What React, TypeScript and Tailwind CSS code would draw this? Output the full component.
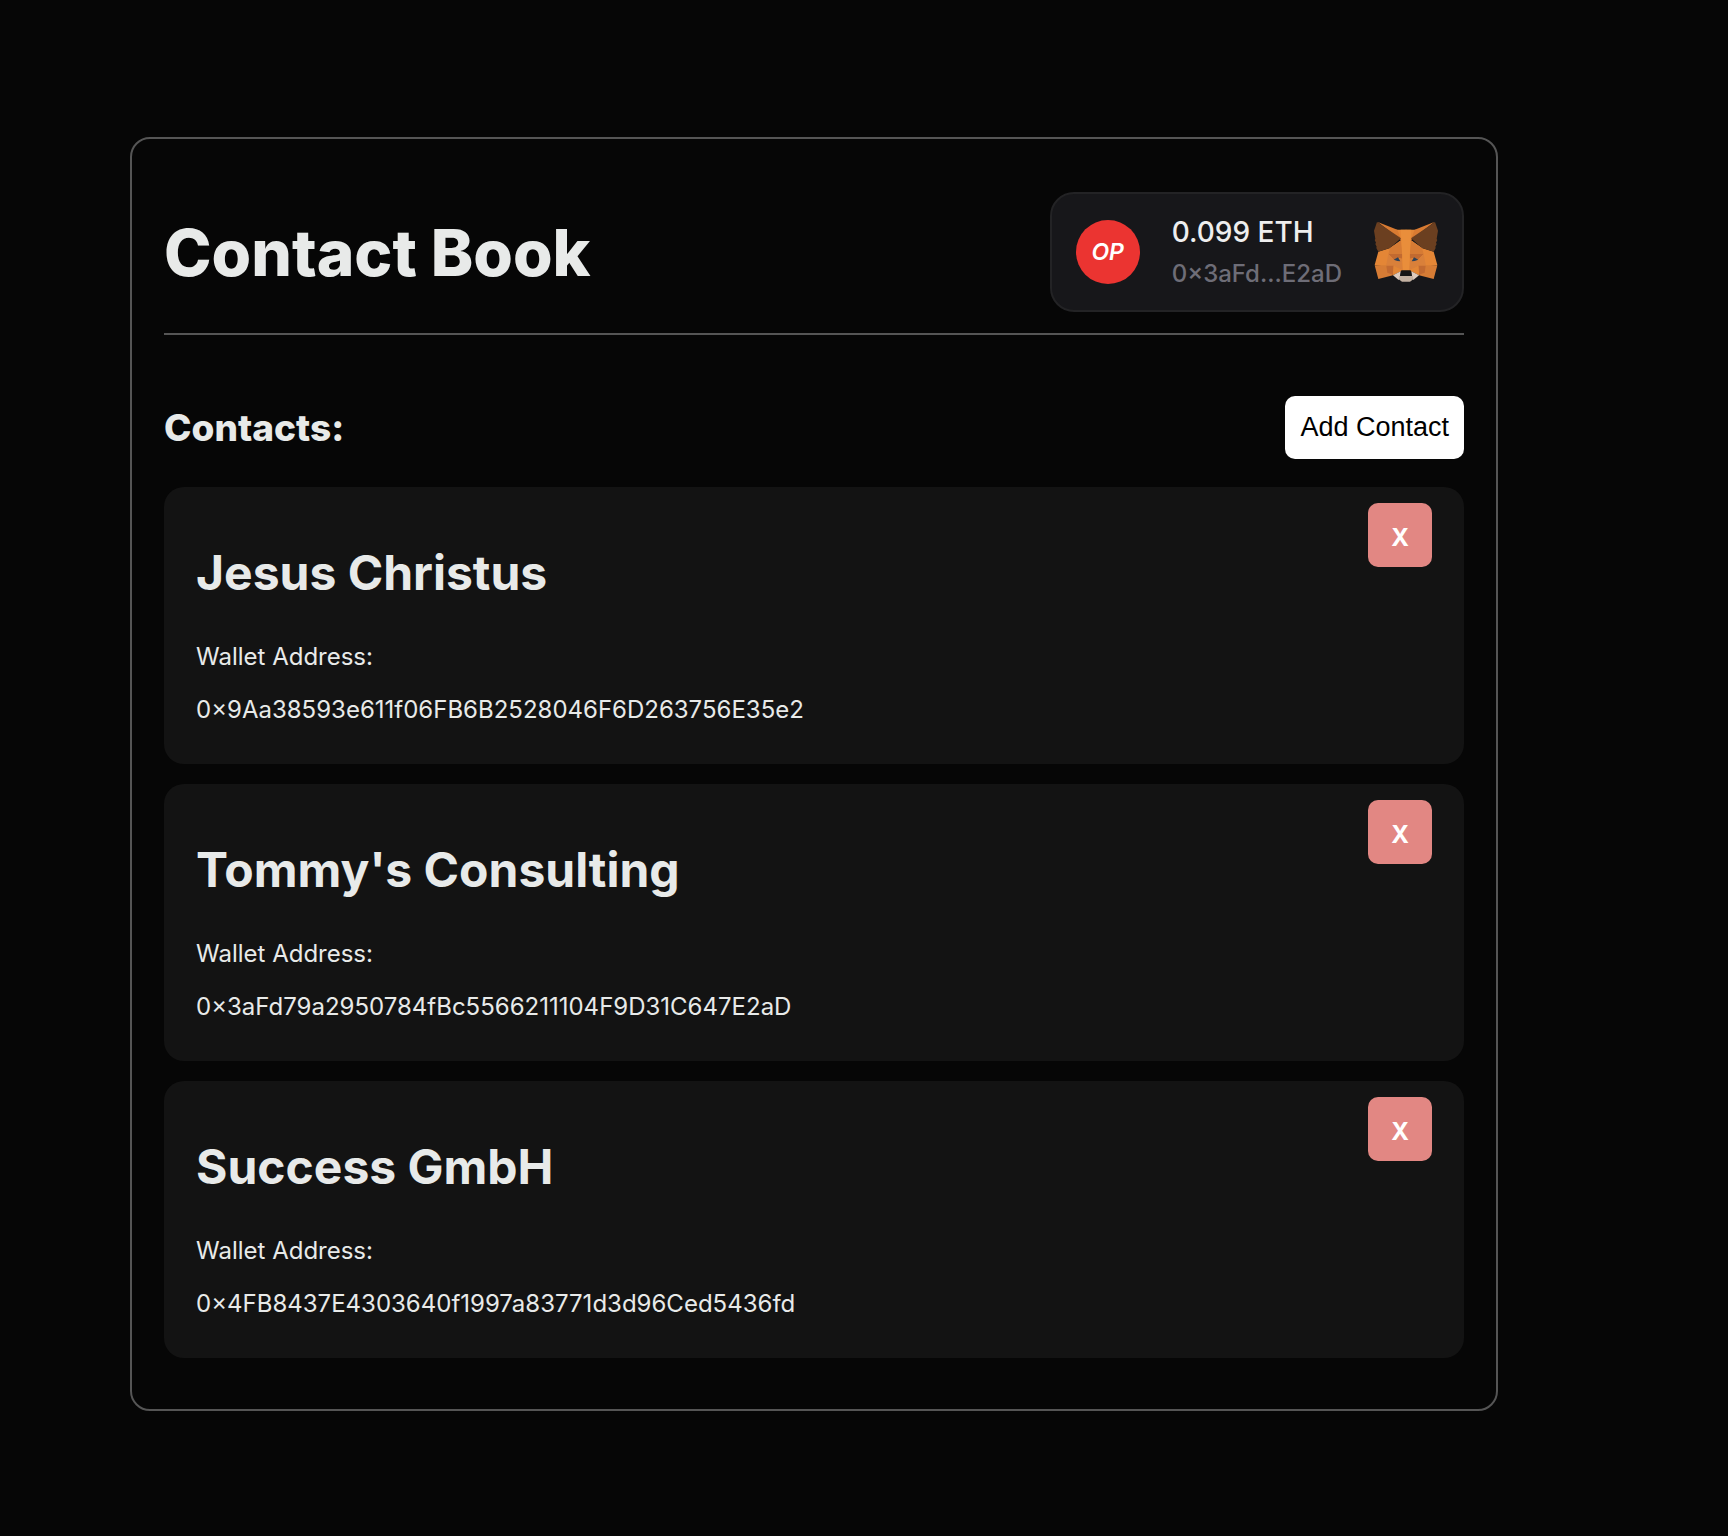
const CONTACTS = [
  { name: "Jesus Christus", address: "0×9Aa38593e611f06FB6B2528046F6D263756E35e2" },
  { name: "Tommy's Consulting", address: "0×3aFd79a2950784fBc5566211104F9D31C647E2aD" },
  { name: "Success GmbH", address: "0×4FB8437E4303640f1997a83771d3d96Ced5436fd" },
];

function FoxHalf() {
  return (
    <g>
      <polygon fill="#E48636" points="13,95 48,84 81,61 66,29 97,29 97,152 80,154 57,166 36,140 2,135" />
      <polygon fill="#D97B32" points="11,6 70,29 82,61" />
      <polygon fill="#6B3F20" points="9,6 0,32 4,57 2,60 6,68 4,72 8,80 7,84 13,95 48,84 81,55" />
      <polygon fill="#D67B34" points="81,61 48,84 43,102 86,102" />
      <polygon fill="#C26A30" points="43,102 86,102 84,116 76,114 60,119" />
      <polygon fill="#D9803A" points="43,102 60,119 84,116 86,150 58,138 36,138" />
      <polygon fill="#2F4258" points="59,119 72,112 79,124 70,123" />
      <polygon fill="#D67C35" points="2,136 36,136 57,166 13,177" />
      <polygon fill="#C26A31" points="37,137 59,137 57,164 40,158" />
      <polygon fill="#E28636" points="59,137 82,152 57,164" />
      <polygon fill="#DDCBBE" points="57,166 80,154 78,168 74,180" />
    </g>
  );
}

function FoxLogo() {
  return (
    <svg viewBox="0 0 192 192" className="size-16 shrink-0" role="img" aria-label="MetaMask">
      <FoxHalf />
      <g transform="matrix(-1 0 0 1 192 0)">
        <FoxHalf />
      </g>
      <polygon fill="#E98E3B" points="80,29 112,29 110,61 105,152 87,152 82,61" />
      <polygon fill="#C3B1A2" points="75,168 117,168 118,178 108,185 84,185 74,178" />
      <polygon fill="#161616" points="82,151 110,151 113,168 79,168" />
    </svg>
  );
}

function WalletBadge() {
  return (
    <div className="flex items-center gap-8 rounded-3xl border-2 border-[#232325] bg-[#17171a] px-6 py-5">
      <div className="flex size-16 shrink-0 items-center justify-center rounded-full bg-[#eb3431] text-[23px] font-semibold text-white italic">
        OP
      </div>
      <div className="flex flex-col gap-2.5 pt-0.5 font-medium">
        <span className="text-[28px] leading-8 text-[#eeeeee]">0.099 ETH</span>
        <span className="text-2xl leading-8 text-[#6e6d77]">0×3aFd...E2aD</span>
      </div>
      <FoxLogo />
    </div>
  );
}

function ContactCard({ name, address }: { name: string; address: string }) {
  return (
    <li className="flex items-start justify-between rounded-[20px] bg-[#131313] px-8 pt-4 pb-10">
      <div className="pt-10">
        <h3 className="mb-10 text-5xl leading-[59px] font-bold">{name}</h3>
        <p className="mb-6 text-2xl leading-[29px]">Wallet Address:</p>
        <p className="text-2xl leading-[29px]">{address}</p>
      </div>
      <button
        type="button"
        aria-label={`Delete ${name}`}
        className="size-16 shrink-0 rounded-[10px] bg-[#e28783] pt-1.5 text-2xl font-bold text-white"
      >
        X
      </button>
    </li>
  );
}

export default function App() {
  return (
    <div className="min-h-screen bg-[#060606] py-[124px] pt-[137px] pr-[230px] pl-[130px] font-['Inter',sans-serif] text-[#e8eae9]">
      <main className="rounded-[20px] border-2 border-[#555555] px-8 pt-8 pb-[51px]">
        <header className="flex items-center justify-between border-b-2 border-[#555555] py-[21px]">
          <h1 className="text-[64px] leading-[77px] font-extrabold">Contact Book</h1>
          <WalletBadge />
        </header>
        <section>
          <div className="mt-[61px] mb-7 flex items-center justify-between">
            <h2 className="text-[37px] leading-[45px] font-extrabold">Contacts:</h2>
            <button
              type="button"
              className="rounded-[10px] bg-white px-[15px] py-4 font-['Liberation_Sans',sans-serif] text-[27px] leading-[31px] text-black"
            >
              Add Contact
            </button>
          </div>
          <ul className="flex flex-col gap-5">
            {CONTACTS.map((contact) => (
              <ContactCard key={contact.address} name={contact.name} address={contact.address} />
            ))}
          </ul>
        </section>
      </main>
    </div>
  );
}
